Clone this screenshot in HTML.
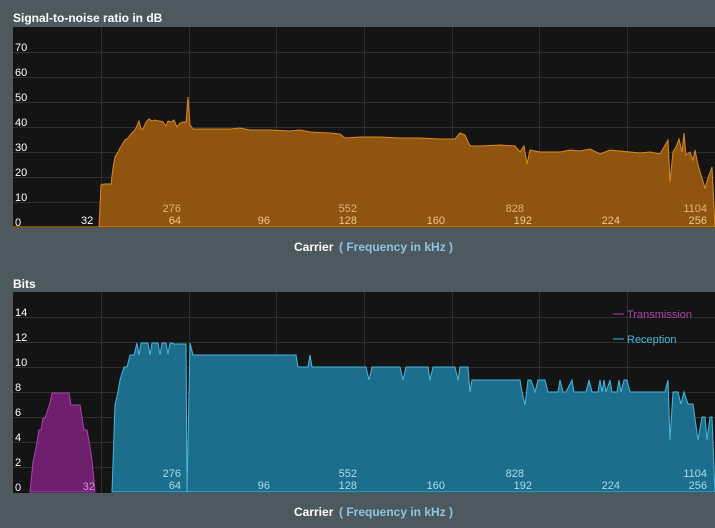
<!DOCTYPE html>
<html><head><meta charset="utf-8"><style>
html,body{margin:0;padding:0;background:#4d595f;width:715px;height:528px;overflow:hidden;font-family:"Liberation Sans",sans-serif}
svg{position:absolute;left:0;top:0}
</style></head><body>
<svg width="715" height="528" viewBox="0 0 715 528" xmlns="http://www.w3.org/2000/svg" font-family="Liberation Sans, sans-serif">
<text x="13" y="22" fill="#fff" font-size="12" font-weight="bold">Signal-to-noise ratio in dB</text>
<rect x="13" y="27" width="702" height="201" fill="#141414"/>
<g stroke="#2e2e2e" stroke-width="1">
<line x1="13" x2="715" y1="52.5" y2="52.5"/><line x1="13" x2="715" y1="77.5" y2="77.5"/><line x1="13" x2="715" y1="102.5" y2="102.5"/><line x1="13" x2="715" y1="127.5" y2="127.5"/><line x1="13" x2="715" y1="152.5" y2="152.5"/><line x1="13" x2="715" y1="177.5" y2="177.5"/><line x1="13" x2="715" y1="202.5" y2="202.5"/>
<line x1="101.5" x2="101.5" y1="27" y2="228"/><line x1="189.5" x2="189.5" y1="27" y2="228"/><line x1="276.5" x2="276.5" y1="27" y2="228"/><line x1="364.5" x2="364.5" y1="27" y2="228"/><line x1="452.5" x2="452.5" y1="27" y2="228"/><line x1="539.5" x2="539.5" y1="27" y2="228"/><line x1="627.5" x2="627.5" y1="27" y2="228"/>
</g>
<polygon fill="#96570f" fill-opacity="0.95" stroke="#d98a1e" stroke-width="1" points="13,227 99,227 101,185 104,184 111,184 113,168 115,157 118,152 120,148 122,145 125,140 128,138 131,134 134,131 136,128 139,121 141,129 143,129 146,122 149,119 152,121 155,120 158,121 160,121 163,122 166,126 168,121 171,122 174,120 177,127 180,123 183,122 186,122 188,97 190,125 193,129 200,129 230,129 240,128 250,130 270,130 290,131 300,130 310,132 330,133 340,134 345,138 360,137 380,137 400,138 420,138 440,139 455,139 460,133 465,135 470,146 480,146 500,145 515,146 520,152 524,146 527,164 530,150 540,152 560,152 570,150 580,151 590,149 600,154 610,150 620,151 630,152 640,153 650,152 660,154 668,140 670,182 673,152 676,147 679,139 682,152 684,133 686,155 690,152 693,160 695,150 698,165 705,188 708,178 712,167 715,227"/>
<g fill="#fff" font-size="11">
<text x="15" y="51">70</text><text x="15" y="76">60</text><text x="15" y="101">50</text><text x="15" y="126">40</text><text x="15" y="151">30</text><text x="15" y="176">20</text><text x="15" y="201">10</text><text x="15" y="226">0</text>
<text x="81" y="224">32</text>
</g>
<g fill="#f3c68a" font-size="11" text-anchor="end">
<text x="181" y="212" fill="#e0b27a">276</text><text x="181" y="224">64</text>
<text x="270" y="224">96</text>
<text x="357" y="212" fill="#e0b27a">552</text><text x="357" y="224">128</text>
<text x="445" y="224">160</text>
<text x="524" y="212" fill="#e0b27a">828</text><text x="532" y="224">192</text>
<text x="620" y="224">224</text>
<text x="707" y="212" fill="#e0b27a">1104</text><text x="707" y="224">256</text>
</g>
<text x="294" y="251" fill="#fff" font-size="12" font-weight="bold">Carrier</text>
<text x="339" y="251" fill="#8fc5e0" font-size="12" font-weight="bold">( Frequency in kHz )</text>

<text x="13" y="288" fill="#fff" font-size="12" font-weight="bold">Bits</text>
<rect x="13" y="292" width="702" height="201" fill="#141414"/>
<g stroke="#2e2e2e" stroke-width="1">
<line x1="13" x2="715" y1="317.5" y2="317.5"/><line x1="13" x2="715" y1="342.5" y2="342.5"/><line x1="13" x2="715" y1="367.5" y2="367.5"/><line x1="13" x2="715" y1="392.5" y2="392.5"/><line x1="13" x2="715" y1="417.5" y2="417.5"/><line x1="13" x2="715" y1="442.5" y2="442.5"/><line x1="13" x2="715" y1="467.5" y2="467.5"/>
<line x1="101.5" x2="101.5" y1="292" y2="493"/><line x1="189.5" x2="189.5" y1="292" y2="493"/><line x1="276.5" x2="276.5" y1="292" y2="493"/><line x1="364.5" x2="364.5" y1="292" y2="493"/><line x1="452.5" x2="452.5" y1="292" y2="493"/><line x1="539.5" x2="539.5" y1="292" y2="493"/><line x1="627.5" x2="627.5" y1="292" y2="493"/>
</g>
<polygon fill="#6e1f6e" stroke="#b040b0" stroke-width="1" points="30,492 33,462 36,448 39,430 41,430 43,418 45,418 50,403 52,393 69,393 71,405 80,405 84,430 87,430 89,441 92,460 95,492"/>
<polygon fill="#1d6e8c" stroke="#45b8dc" stroke-width="1" points="112,492 115,405 118,392 120,380 124,367 127,367 130,355 134,355 137,343 139,355 141,343 148,343 150,355 152,343 158,343 160,355 162,343 166,343 168,354 170,343 172,343 174,344 186,344 187,492 190,343 193,355 220,355 296,355 298,367 308,367 310,355 312,367 366,367 369,380 372,367 400,367 403,380 406,367 428,367 430,380 433,367 455,367 458,380 460,367 468,367 470,392 472,380 520,380 522,392 525,405 528,380 531,380 535,392 538,380 545,380 548,392 552,392 558,392 560,380 563,392 566,392 572,380 574,392 586,392 589,380 592,392 598,392 600,380 602,392 604,380 606,392 610,380 612,392 617,392 619,380 621,392 624,380 627,380 630,392 665,392 668,380 670,440 673,392 678,392 681,404 684,392 688,404 693,404 698,440 702,417 705,417 707,440 710,417 712,417 715,492"/>
<g fill="#fff" font-size="11">
<text x="15" y="316">14</text><text x="15" y="341">12</text><text x="15" y="366">10</text><text x="15" y="391">8</text><text x="15" y="416">6</text><text x="15" y="441">4</text><text x="15" y="466">2</text><text x="15" y="491">0</text>
</g>
<text x="95" y="490" fill="#d896d8" font-size="11" text-anchor="end">32</text>
<g fill="#a8dcef" font-size="11" text-anchor="end">
<text x="181" y="477">276</text><text x="181" y="489">64</text>
<text x="270" y="489">96</text>
<text x="357" y="477">552</text><text x="357" y="489">128</text>
<text x="445" y="489">160</text>
<text x="524" y="477">828</text><text x="532" y="489">192</text>
<text x="620" y="489">224</text>
<text x="707" y="477">1104</text><text x="707" y="489">256</text>
</g>
<line x1="613" x2="624" y1="314" y2="314" stroke="#b040b0"/>
<text x="627" y="318" fill="#b040b0" font-size="11">Transmission</text>
<line x1="613" x2="624" y1="339" y2="339" stroke="#45b8dc"/>
<text x="627" y="343" fill="#45b8dc" font-size="11">Reception</text>
<text x="294" y="516" fill="#fff" font-size="12" font-weight="bold">Carrier</text>
<text x="339" y="516" fill="#8fc5e0" font-size="12" font-weight="bold">( Frequency in kHz )</text>
</svg>
</body></html>
